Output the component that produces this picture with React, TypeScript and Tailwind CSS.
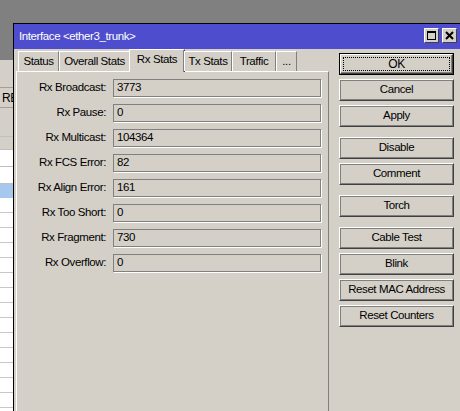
import React from "react";

const fields: [string, string][] = [
  ["Rx Broadcast:", "3773"],
  ["Rx Pause:", "0"],
  ["Rx Multicast:", "104364"],
  ["Rx FCS Error:", "82"],
  ["Rx Align Error:", "161"],
  ["Rx Too Short:", "0"],
  ["Rx Fragment:", "730"],
  ["Rx Overflow:", "0"],
];

const tabs: { label: string; w: string; active?: boolean }[] = [
  { label: "Status", w: "w-[41px]" },
  { label: "Overall Stats", w: "w-[71px]" },
  { label: "Rx Stats", w: "w-[56px]", active: true },
  { label: "Tx Stats", w: "w-[48px]" },
  { label: "Traffic", w: "w-[44px]" },
  { label: "...", w: "w-[21px]" },
];

function Btn({ label, def, mt }: { label: string; def?: boolean; mt?: string }) {
  if (def) {
    return (
      <div className={`h-[22px] border border-black ${mt ?? ""}`}>
        <div className="h-full border border-t-white border-l-white border-r-[#404040] border-b-[#404040] shadow-[inset_-1px_-1px_0_#808080] p-[2px]">
          <div className="h-full border border-dotted border-black flex items-center justify-center text-[12px] text-black">
            {label}
          </div>
        </div>
      </div>
    );
  }
  return (
    <div
      className={`h-[22px] border border-t-white border-l-white border-r-[#404040] border-b-[#404040] shadow-[inset_-1px_-1px_0_#808080,inset_1px_1px_0_#808080] flex items-center justify-center text-[11.5px] text-black ${mt ?? ""}`}
    >
      {label}
    </div>
  );
}

export default function App() {
  return (
    <div className="relative w-[460px] h-[411px] overflow-hidden bg-[#808080] font-['Liberation_Sans',Arial,sans-serif] text-[11px] leading-none tracking-[-0.4px]">
      {/* background window */}
      <div className="absolute left-0 top-[60px] w-[40px] bottom-0 bg-[#d4d0c8] flex flex-col">
        <div className="h-[28px] border-b border-[#a0a0a0]" />
        <div className="h-[20px] border-b border-[#a0a0a0] flex items-center pl-[2px] text-[12px] text-black">
          RE
        </div>
        <div className="h-[29px] border-b border-[#c0c0c0]" />
        <div className="h-[13px] border-b border-[#c0c0c0] bg-[#d4d0c8]" />
        <div className="h-[17px] border-b border-[#c0c0c0] bg-white" />
        <div className="h-[17px] border-b border-[#c0c0c0] bg-white" />
        <div className="h-[14px] bg-[#a6c8ee]" />
        <div className="flex-1 bg-white flex flex-col">
          {Array.from({ length: 14 }).map((_, i) => (
            <div key={i} className="h-[15px] border-b border-[#c8c8c8] shrink-0" />
          ))}
        </div>
      </div>

      {/* dialog window */}
      <div className="absolute left-[13px] top-[23px] w-[470px] h-[400px] border-t border-l border-black bg-[#d4d0c8] flex flex-col">
        {/* title bar */}
        <div className="h-[25px] bg-[#4d4dcd] flex items-center pl-[5px] relative">
          <span className="text-white text-[11.5px]">Interface &lt;ether3_trunk&gt;</span>
          <div className="absolute left-[410px] top-[4px] flex gap-[3px]">
            <div className="w-[15px] h-[15px] bg-[#d4d0c8] border border-t-white border-l-white border-r-[#404040] border-b-[#404040] flex items-center justify-center">
              <div className="w-[9px] h-[9px] border border-black border-t-2" />
            </div>
            <div className="w-[15px] h-[15px] bg-[#d4d0c8] border border-t-white border-l-white border-r-[#404040] border-b-[#404040] flex items-center justify-center">
              <svg width="9" height="9" viewBox="0 0 9 9">
                <path d="M1 1 L8 8 M8 1 L1 8" stroke="black" strokeWidth="2" />
              </svg>
            </div>
          </div>
        </div>

        {/* body */}
        <div className="flex-1 flex">
          {/* tabs + panel */}
          <div className="w-[315px] pl-[2px] flex flex-col">
            <div className="h-[22px] flex items-end pl-[2px] relative z-10">
              {tabs.map((t) =>
                t.active ? (
                  <div
                    key={t.label}
                    className={`${t.w} h-[23px] -mb-[1px] -mx-[1px] bg-[#d4d0c8] border-t border-l border-white border-r border-r-[#404040] shadow-[inset_-1px_0_0_#808080] flex items-center justify-center text-[11.5px] text-black pb-[2px]`}
                  >
                    {t.label}
                  </div>
                ) : (
                  <div
                    key={t.label}
                    className={`${t.w} h-[20px] bg-[#d4d0c8] border-t border-l border-white border-r border-r-[#808080] flex items-center justify-center text-[11.5px] text-black`}
                  >
                    {t.label}
                  </div>
                )
              )}
            </div>
            <div className="flex-1 border-t border-l border-white border-r border-r-[#808080] pt-[7px] flex flex-col gap-[7px]">
              {fields.map(([l, v]) => (
                <div key={l} className="flex items-center h-[18px]">
                  <div className="w-[90px] text-right text-[11.5px] text-black pr-[1px]">{l}</div>
                  <div className="ml-[6px] w-[208px] h-[18px] border border-[#808080] shadow-[1px_1px_0_white] flex items-center pl-[3px] text-[11.5px] text-black">
                    {v}
                  </div>
                </div>
              ))}
            </div>
          </div>

          {/* buttons */}
          <div className="ml-[10px] w-[115px] pt-[4px] flex flex-col gap-[4px]">
            <Btn label="OK" def />
            <Btn label="Cancel" />
            <Btn label="Apply" />
            <Btn label="Disable" mt="mt-[6px]" />
            <Btn label="Comment" />
            <Btn label="Torch" mt="mt-[6px]" />
            <Btn label="Cable Test" mt="mt-[6px]" />
            <Btn label="Blink" />
            <Btn label="Reset MAC Address" />
            <Btn label="Reset Counters" />
          </div>
        </div>
      </div>
    </div>
  );
}
